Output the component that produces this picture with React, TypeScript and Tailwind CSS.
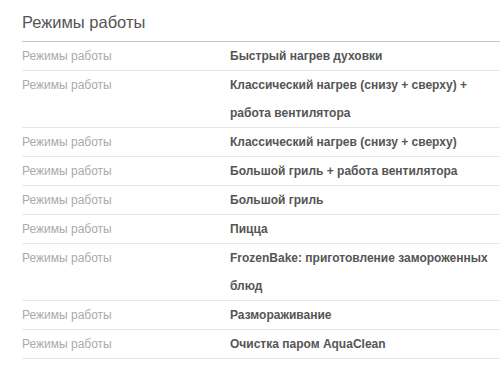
const rows = [
  "Быстрый нагрев духовки",
  "Классический нагрев (снизу + сверху) + работа вентилятора",
  "Классический нагрев (снизу + сверху)",
  "Большой гриль + работа вентилятора",
  "Большой гриль",
  "Пицца",
  "FrozenBake: приготовление замороженных блюд",
  "Размораживание",
  "Очистка паром AquaClean",
];

export default function App() {
  return (
    <div className="min-h-[375px] w-[500px] overflow-hidden bg-white font-['Liberation_Sans',Arial,sans-serif]">
      <div className="ml-[22px] w-[478px] pt-[12px]">
        <h2 className="pb-[9px] text-[16.5px] leading-[20px] text-[#555]">Режимы работы</h2>
        <div className="border-t border-[#c4c4c4]">
          {rows.map((value, i) => (
            <div key={i} className="flex border-b border-[#e6e6e6] text-[12px] leading-[28px]">
              <div className="w-[208px] shrink-0 text-[#aaa]">Режимы работы</div>
              <div className="w-[270px] pr-[4px] font-bold text-[#555]">{value}</div>
            </div>
          ))}
        </div>
      </div>
    </div>
  );
}
